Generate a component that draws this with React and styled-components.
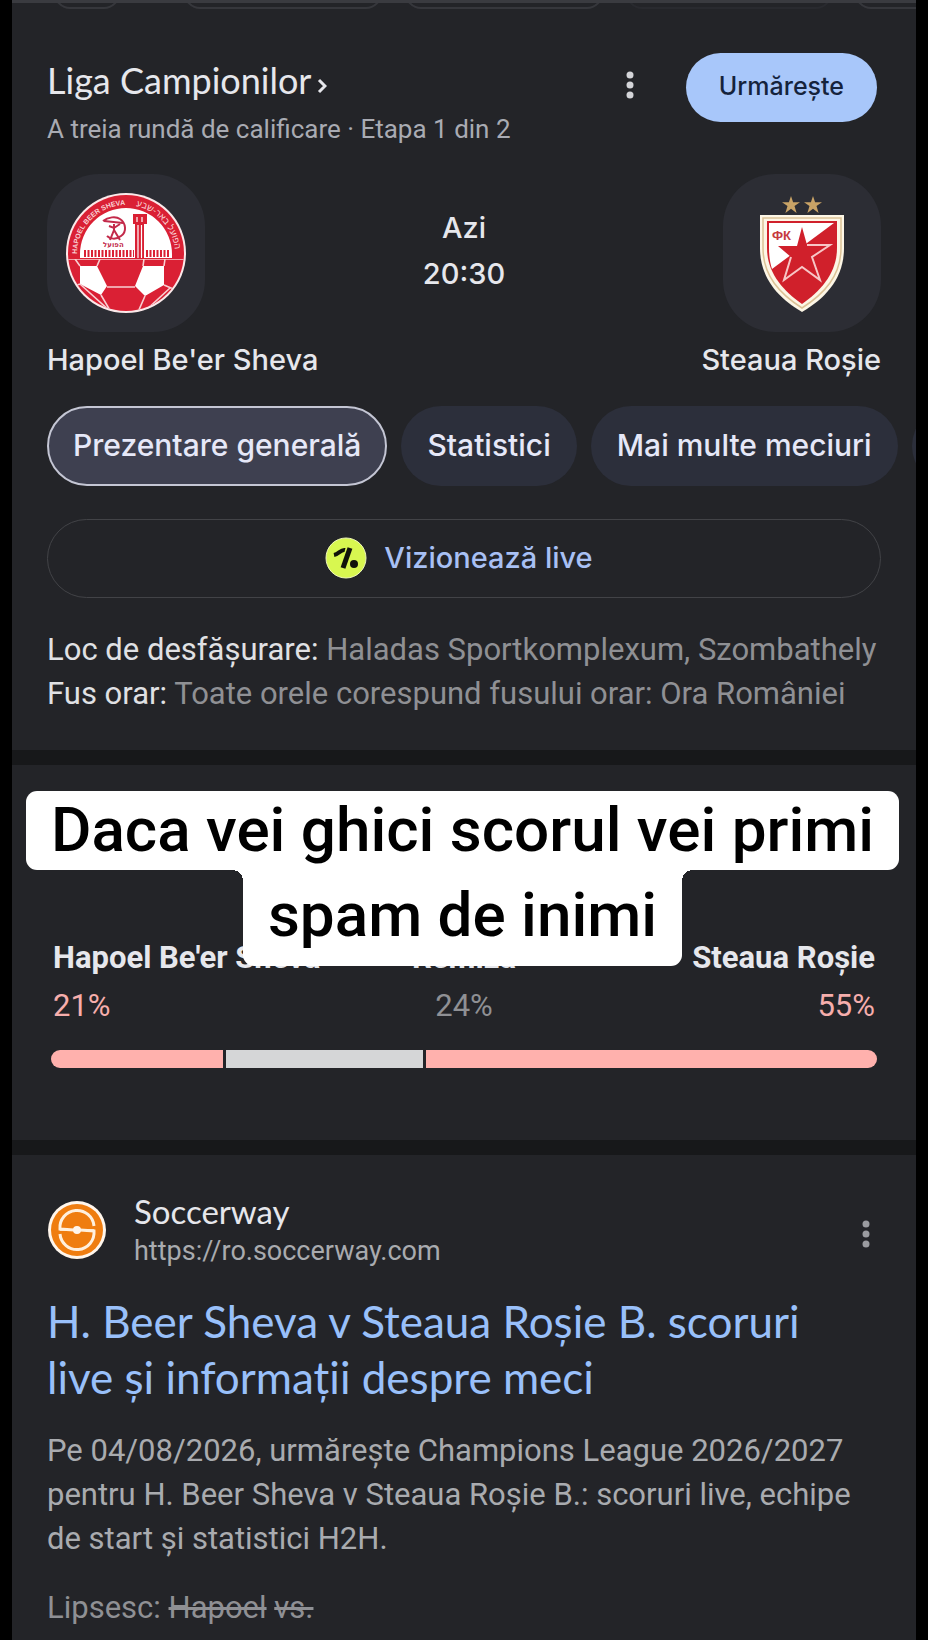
import React from 'react';
import styled, { createGlobalStyle } from 'styled-components';

const GlobalStyle = createGlobalStyle`
  * { box-sizing: border-box; }
  body { margin: 0; background: #000; }
  button { font: inherit; cursor: pointer; }
  h1, h2, p { margin: 0; font-weight: 400; }
  a { color: inherit; text-decoration: none; }
`;

const teams = { home: "Hapoel Be'er Sheva", away: 'Steaua Roșie' };

const tabs = ['Prezentare generală', 'Statistici', 'Mai multe meciuri'];

const odds = [
  { name: teams.home, value: 21, align: 'left', tone: '#f6aeac', bar: '#ffb1ad' },
  { name: 'Remiză', value: 24, align: 'center', tone: '#8f9094', bar: '#d5d6d7' },
  { name: teams.away, value: 55, align: 'right', tone: '#f6aeac', bar: '#ffb1ad' },
];

function HomeCrest() {
  return (
    <svg width="120" height="120" viewBox="0 0 120 120" role="img" aria-label={teams.home}>
      <defs>
        <clipPath id="ball"><rect x="0" y="66" width="120" height="54" /></clipPath>
        <clipPath id="ballRound"><circle cx="60" cy="60" r="58" /></clipPath>
        <path id="arc" d="M11 61A49 49 0 0 1 109 61" />
      </defs>
      <circle cx="60" cy="60" r="60" fill="#fbe9ea" />
      <circle cx="60" cy="60" r="58" fill="#da2034" />
      <path d="M14 65V61A46 46 0 0 1 106 61V65Z" fill="#fff" />
      <g fill="#f9d3d6" fontFamily="'Liberation Sans', 'DejaVu Sans', sans-serif">
        <text fontSize="7" fontWeight="700"><textPath href="#arc" startOffset="0">HAPOEL BEER SHEVA</textPath></text>
        <text fontSize="9"><textPath href="#arc" startOffset="87">הפועל באר-שבע</textPath></text>
      </g>
      <path d="M18 60.500H68M80 60.500H103" stroke="#da2034" strokeWidth="7" strokeDasharray="2 1.500" />
      <path d="M67 21H81V31H78V66H69V31H67Z" fill="#da2034" />
      <path d="M72 32V65M75.500 32V65M71 24V29M76 24V29" stroke="#fff" strokeWidth="1.200" />
      <g fill="none" stroke="#c32a4a" strokeWidth="2">
        <path d="M37 28C42 24 50 23 54 26C60 30 61 39 55 43C50 47 44 46 41 43M38 28L57 30" />
        <path d="M48 31V37L44 47M48 37L54 47M43 33L48 35L54 31" />
      </g>
      <text x="37" y="54" fontSize="7" fontWeight="700" fontFamily="'DejaVu Sans', sans-serif" fill="#c32a4a">הפועל</text>
      <g clipPath="url(#ball)">
        <g clipPath="url(#ballRound)">
          <path d="M14 73H31L41 93L35 102L14 91Z M77 73H98V92L79 103L69 93Z" fill="#fff" />
          <path
            d="M0 66H120M9 66L14 73M34 66L31 73M78 66L77 73M99 66L98 73M41 94H69M14 91L6 94M14 91L45 119M35 102L45 119M79 103L72 119M98 92L112 98M78 119L104 95"
            fill="none"
            stroke="#f8cfd2"
            strokeWidth="1.600"
          />
        </g>
      </g>
    </svg>
  );
}

function AwayCrest() {
  const star = 'M9 0L11.100 6.200H18L12.500 10L14.600 17L9 12.800L3.400 17L5.500 10L0 6.200H6.900Z';
  return (
    <svg width="84" height="118" viewBox="0 0 84 118" role="img" aria-label={teams.away}>
      <path d={star} transform="translate(22 2)" fill="#c9a366" />
      <path d={star} transform="translate(44 2)" fill="#c9a366" />
      <path d="M0 21H84V54C84 84 66 104 42 118C18 104 0 84 0 54Z" fill="#fdf6e6" />
      <path d="M3 24H81V54C81 82 64 100 42 114C20 100 3 82 3 54Z" fill="none" stroke="#dcc296" strokeWidth="1.500" />
      <path d="M7 27H77V54C77 78 62 96 42 110C22 96 7 78 7 54Z" fill="#d0202b" />
      <path d="M9 29H74L12 75C10 69 9 62 9 54Z" fill="#fff" />
      <path d="M42 33L47 51H70L52 63L60 86L42 73L24 86L31 63L18 52H37Z" fill="#d0202b" />
      <path d="M47 51H70L52 63L60 86L42 73L24 86L31 63" fill="none" stroke="#f7c6c6" strokeWidth="2" />
      <text x="12" y="46" fontSize="13" fontWeight="700" fontFamily="'Liberation Sans', sans-serif" fill="#c63a40">ФК</text>
    </svg>
  );
}

function LiveLogo() {
  return (
    <svg width="42" height="42" viewBox="0 0 42 42" aria-hidden="true">
      <circle cx="21" cy="21" r="20" fill="#d8f750" stroke="#eef7b8" />
      <path d="M9 18C14 17 16 12 20 13" fill="none" stroke="#11130a" strokeWidth="4" />
      <path d="M25 11L18 31" fill="none" stroke="#11130a" strokeWidth="5" />
      <circle cx="29" cy="27" r="4" fill="#11130a" />
    </svg>
  );
}

function SiteLogo() {
  return (
    <svg width="60" height="60" viewBox="0 0 60 60" aria-hidden="true">
      <circle cx="30" cy="30" r="29" fill="#fff6ec" />
      <circle cx="30" cy="30" r="26" fill="#ef7d10" />
      <g fill="none" stroke="#fff0de" strokeWidth="3">
        <path d="M47 26A17 17 0 0 0 13 29L27 30" />
        <path d="M13 34A17 17 0 0 0 47 31L33 30" />
        <path d="M13 30H47" strokeWidth="1.500" />
      </g>
      <circle cx="30" cy="30" r="4" fill="#fff6ec" />
    </svg>
  );
}

function Dots() {
  return (
    <svg width="8" height="28" viewBox="0 0 8 28" fill="currentColor" aria-hidden="true">
      <circle cx="4" cy="4" r="3.500" />
      <circle cx="4" cy="14" r="3.500" />
      <circle cx="4" cy="24" r="3.500" />
    </svg>
  );
}

function App() {
  return (
    <Page>
      <GlobalStyle />
      <ChipStrip>
        <ChipEdge $w={66} />
        <ChipEdge $w={198} />
        <ChipEdge $w={198} />
        <ChipEdge $w={206} $faint />
        <ChipEdge $w={198} />
      </ChipStrip>

      <Match>
        <Header>
          <Heading>
            <League><a href="#liga">Liga Campionilor<Arrow width="10" height="16" viewBox="0 0 10 16" aria-hidden="true"><path d="M2 2L8 8L2 14" /></Arrow></a></League>
            <Stage>A treia rundă de calificare · Etapa 1 din 2</Stage>
          </Heading>
          <MenuButton aria-label="Mai multe opțiuni"><Dots /></MenuButton>
          <Follow>Urmărește</Follow>
        </Header>

        <Versus>
          <Team>
            <Tile><HomeCrest /></Tile>
            <TeamName>{teams.home}</TeamName>
          </Team>
          <Kickoff>
            <span>Azi</span>
            <time>20:30</time>
          </Kickoff>
          <Team $end>
            <Tile><AwayCrest /></Tile>
            <TeamName>{teams.away}</TeamName>
          </Team>
        </Versus>

        <Tabs>
          {tabs.map((t, i) => <Tab key={t} $active={i === 0}>{t}</Tab>)}
          <Tab aria-label="Mai mult" />
        </Tabs>

        <Watch><LiveLogo />Vizionează live</Watch>

        <Info>
          <p><b>Loc de desfășurare:</b> Haladas Sportkomplexum, Szombathely</p>
          <p><b>Fus orar:</b> Toate orele corespund fusului orar: Ora României</p>
        </Info>
      </Match>

      <Odds>
        <Labels>
          {odds.map((o) => (
            <Label key={o.name} $align={o.align}>
              <b>{o.name}</b>
              <Percent $tone={o.tone}>{o.value}%</Percent>
            </Label>
          ))}
        </Labels>
        <Bar>
          {odds.map((o) => <Segment key={o.name} $color={o.bar} style={{ flexGrow: o.value }} />)}
        </Bar>
        <Caption>
          <CaptionLine>Daca vei ghici scorul vei primi</CaptionLine>
          <CaptionLine $second>spam de inimi</CaptionLine>
        </Caption>
      </Odds>

      <Result>
        <Site>
          <SiteLogo />
          <SiteText>
            <SiteName>Soccerway</SiteName>
            <SiteUrl>https://ro.soccerway.com</SiteUrl>
          </SiteText>
          <MenuButton $muted aria-label="Despre acest rezultat"><Dots /></MenuButton>
        </Site>
        <Title><a href="#rezultat">H. Beer Sheva v Steaua Roșie B. scoruri live și informații despre meci</a></Title>
        <Text>
          Pe 04/08/2026, urmărește Champions League 2026/2027 pentru H. Beer Sheva v Steaua Roșie B.: scoruri live, echipe de start și statistici H2H.
        </Text>
        <Missing>Lipsesc: <s>Hapoel</s> <s>vs.</s></Missing>
      </Result>
    </Page>
  );
}

const display = "Lato, 'Open Sans', sans-serif";
const medium = "Inter, 'Open Sans', sans-serif";
const body = "Roboto, 'Liberation Sans', sans-serif";

const Page = styled.div`
  min-height: 100vh;
  margin: 0 12px;
  background: #232428;
  color: #e6e7ec;
  font-family: ${body};
  overflow: hidden;
`;

const ChipStrip = styled.div`
  display: flex;
  gap: 23px;
  height: 9px;
  padding-left: 42px;
  border-top: 3px solid #3a3b40;
  overflow: hidden;
`;

const ChipEdge = styled.div`
  flex: none;
  align-self: flex-end;
  width: ${(p) => p.$w}px;
  height: 40px;
  border: 2px solid ${(p) => (p.$faint ? '#292a2f' : '#36373c')};
  border-radius: 16px;

  &:first-child { margin-right: 41px; }
`;

const Match = styled.section`
  padding: 44px 35px 34px;
`;

const Header = styled.header`
  display: flex;
  align-items: flex-start;
`;

const Heading = styled.div`
  flex: 1;
  padding-top: 7px;
`;

const League = styled.h1`
  font-family: ${display};
  font-size: 36px;
  line-height: 40px;
`;

const Arrow = styled.svg`
  margin-left: 6px;
  fill: none;
  stroke: currentColor;
  stroke-width: 3;
`;

const Stage = styled.p`
  margin-top: 13px;
  font-size: 26px;
  line-height: 32px;
  color: #a9abb3;
`;

const MenuButton = styled.button`
  display: flex;
  justify-content: center;
  width: 32px;
  padding: ${(p) => (p.$muted ? '8px 0 0' : '18px 0')};
  border: 0;
  background: none;
  color: ${(p) => (p.$muted ? '#9a9ba0' : '#d3d4d8')};
`;

const Follow = styled.button`
  height: 69px;
  margin: 0 4px 0 40px;
  padding: 0 33px 3px;
  border: 0;
  border-radius: 35px;
  background: #a8c7fa;
  color: #15233c;
  font-family: ${medium};
  font-size: 25px;
  font-weight: 500;
`;

const Versus = styled.div`
  display: flex;
  justify-content: space-between;
  margin-top: 29px;
`;

const Team = styled.div`
  display: flex;
  flex: 1;
  flex-direction: column;
  align-items: ${(p) => (p.$end ? 'flex-end' : 'flex-start')};
`;

const Tile = styled.div`
  display: grid;
  place-items: center;
  width: 158px;
  height: 158px;
  border-radius: 52px;
  background: #2c2d34;
`;

const TeamName = styled.div`
  margin-top: 8px;
  font-family: ${medium};
  font-size: 29px;
  font-weight: 500;
  line-height: 40px;
  white-space: nowrap;
`;

const Kickoff = styled.div`
  display: flex;
  flex-direction: column;
  align-items: center;
  padding-top: 31px;
  font-family: ${medium};
  font-size: 29px;
  font-weight: 500;
  line-height: 46px;
`;

const Tabs = styled.nav`
  display: flex;
  gap: 14px;
  margin: 26px -35px 0 0;
  overflow: hidden;
`;

const Tab = styled.button`
  flex: none;
  min-width: 80px;
  height: 80px;
  padding: 0 24px 3px;
  border: 2px solid ${(p) => (p.$active ? '#c4c6d4' : 'transparent')};
  border-radius: 40px;
  background: ${(p) => (p.$active ? '#3e4050' : '#2c2f3b')};
  color: #e6e8f8;
  font-family: ${medium};
  font-size: 30px;
  font-weight: 500;
`;

const Watch = styled.button`
  display: flex;
  align-items: center;
  justify-content: center;
  gap: 17px;
  width: 100%;
  height: 79px;
  margin-top: 33px;
  padding: 0 10px 2px 0;
  border: 1px solid #424347;
  border-radius: 40px;
  background: none;
  color: #a8c0f4;
  font-family: ${medium};
  font-size: 29px;
  font-weight: 500;
`;

const Info = styled.div`
  margin-top: 30px;
  font-size: 31px;
  line-height: 44px;
  color: #8f9094;

  b { font-weight: 400; color: #e0e1e4; }
`;

const Odds = styled.section`
  position: relative;
  padding: 173px 39px 72px;
  border: solid #17181a;
  border-width: 15px 0;
`;

const Labels = styled.div`
  display: grid;
  grid-template-columns: 1fr auto 1fr;
  padding: 0 2px;
  font-size: 31px;
  line-height: 40px;
`;

const Label = styled.div`
  display: flex;
  flex-direction: column;
  gap: 8px;
  text-align: ${(p) => p.$align};
`;

const Percent = styled.span`
  color: ${(p) => p.$tone};
`;

const Bar = styled.div`
  display: flex;
  gap: 3px;
  height: 18px;
  margin-top: 24px;
  border-radius: 9px;
  overflow: hidden;
`;

const Segment = styled.div`
  flex-basis: 0;
  background: ${(p) => p.$color};
`;

/* sticker that lies over the odds */
const Caption = styled.div`
  position: absolute;
  top: 26px;
  left: 0;
  right: 0;
  display: flex;
  flex-direction: column;
  align-items: center;
  padding-right: 3px;
`;

const CaptionLine = styled.div`
  position: relative;
  height: ${(p) => (p.$second ? 96 : 79)}px;
  padding: 0 25px;
  border-radius: ${(p) => (p.$second ? '0 0 11px 11px' : '11px')};
  background: #fff;
  color: #000;
  font-family: Roboto, sans-serif;
  font-size: 62px;
  font-weight: 500;
  line-height: ${(p) => (p.$second ? 90 : 78)}px;
  white-space: nowrap;

  ${(p) => p.$second && `
    &::before, &::after {
      content: '';
      position: absolute;
      top: 0;
      width: 11px;
      height: 11px;
    }
    &::before {
      right: 100%;
      background: radial-gradient(circle at 0 100%, transparent 11px, #fff 11px);
    }
    &::after {
      left: 100%;
      background: radial-gradient(circle at 100% 100%, transparent 11px, #fff 11px);
    }
  `}
`;

const Result = styled.section`
  padding: 38px 34px 10px 35px;
`;

const Site = styled.div`
  display: flex;
  align-items: center;
`;

const SiteText = styled.div`
  display: flex;
  flex: 1;
  flex-direction: column;
  gap: 6px;
  margin-left: 27px;
`;

const SiteName = styled.span`
  font-family: ${display};
  font-size: 33px;
  line-height: 36px;
`;

const SiteUrl = styled.cite`
  font-size: 27px;
  font-style: normal;
  line-height: 32px;
  color: #a9abaf;
`;

const Title = styled.h2`
  margin-top: 26px;
  padding-right: 40px;
  font-family: ${display};
  font-size: 44px;
  line-height: 56px;
  color: #99c0fa;
`;

const Text = styled.p`
  margin-top: 24px;
  font-size: 31px;
  line-height: 44px;
  color: #a9abaf;
`;

const Missing = styled.p`
  margin-top: 25px;
  font-size: 31px;
  line-height: 44px;
  color: #8f9094;
`;

export default App;
